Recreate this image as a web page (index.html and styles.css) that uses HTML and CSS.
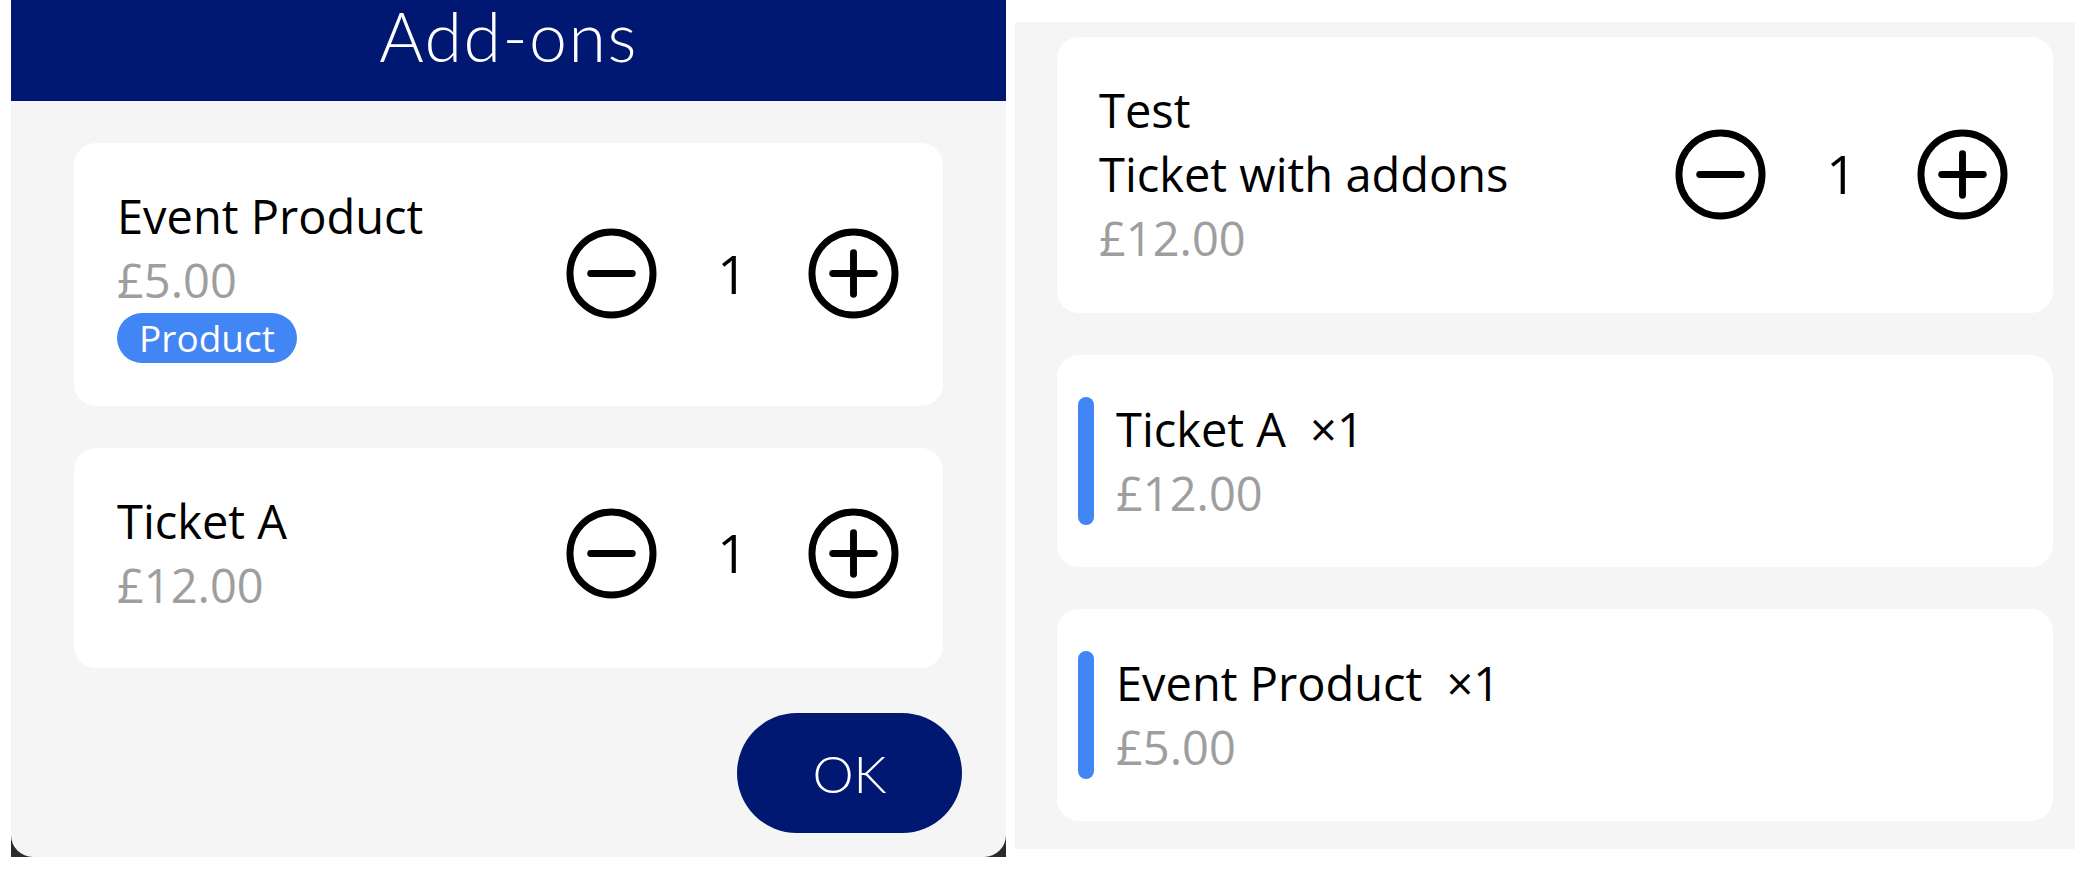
FILE: index.html
```html
<!DOCTYPE html>
<html lang="en">
<head>
<meta charset="utf-8">
<title>Add-ons</title>
<link rel="stylesheet" href="styles.css">
</head>
<body>
<div class="page">
  <div class="modal-wrap">
    <div class="modal">
      <div class="modal-header">Add-ons</div>
      <div class="modal-body">
        <div class="card">
          <div class="info">
            <div class="name">Event Product</div>
            <div class="price">£5.00</div>
            <span class="badge">Product</span>
          </div>
          <div class="stepper">
            <svg class="step-icon" viewBox="0 0 92 92"><circle cx="46" cy="46" r="42" fill="none" stroke="#000" stroke-width="7"/><line x1="25" y1="46" x2="67" y2="46" stroke="#000" stroke-width="7" stroke-linecap="round"/></svg>
            <span class="count">1</span>
            <svg class="step-icon" viewBox="0 0 92 92"><circle cx="46" cy="46" r="42" fill="none" stroke="#000" stroke-width="7"/><line x1="25" y1="46" x2="67" y2="46" stroke="#000" stroke-width="7" stroke-linecap="round"/><line x1="46" y1="25" x2="46" y2="67" stroke="#000" stroke-width="7" stroke-linecap="round"/></svg>
          </div>
        </div>
        <div class="card card-plain">
          <div class="info">
            <div class="name">Ticket A</div>
            <div class="price">£12.00</div>
          </div>
          <div class="stepper">
            <svg class="step-icon" viewBox="0 0 92 92"><circle cx="46" cy="46" r="42" fill="none" stroke="#000" stroke-width="7"/><line x1="25" y1="46" x2="67" y2="46" stroke="#000" stroke-width="7" stroke-linecap="round"/></svg>
            <span class="count">1</span>
            <svg class="step-icon" viewBox="0 0 92 92"><circle cx="46" cy="46" r="42" fill="none" stroke="#000" stroke-width="7"/><line x1="25" y1="46" x2="67" y2="46" stroke="#000" stroke-width="7" stroke-linecap="round"/><line x1="46" y1="25" x2="46" y2="67" stroke="#000" stroke-width="7" stroke-linecap="round"/></svg>
          </div>
        </div>
        <button class="ok-btn">OK</button>
      </div>
    </div>
  </div>

  <div class="panel">
    <div class="card card-main">
      <div class="info">
        <div class="name">Test</div>
        <div class="name">Ticket with addons</div>
        <div class="price">£12.00</div>
      </div>
      <div class="stepper">
        <svg class="step-icon" viewBox="0 0 92 92"><circle cx="46" cy="46" r="42" fill="none" stroke="#000" stroke-width="7"/><line x1="25" y1="46" x2="67" y2="46" stroke="#000" stroke-width="7" stroke-linecap="round"/></svg>
        <span class="count">1</span>
        <svg class="step-icon" viewBox="0 0 92 92"><circle cx="46" cy="46" r="42" fill="none" stroke="#000" stroke-width="7"/><line x1="25" y1="46" x2="67" y2="46" stroke="#000" stroke-width="7" stroke-linecap="round"/><line x1="46" y1="25" x2="46" y2="67" stroke="#000" stroke-width="7" stroke-linecap="round"/></svg>
      </div>
    </div>
    <div class="line-card">
      <div class="bar"></div>
      <div class="line-info">
        <div class="name">Ticket A<span class="qty">×1</span></div>
        <div class="price">£12.00</div>
      </div>
    </div>
    <div class="line-card">
      <div class="bar"></div>
      <div class="line-info">
        <div class="name">Event Product<span class="qty">×1</span></div>
        <div class="price">£5.00</div>
      </div>
    </div>
  </div>
</div>
</body>
</html>
```

FILE: styles.css
```css
* { box-sizing: border-box; }

html, body {
  margin: 0;
  padding: 0;
  background: #ffffff;
}

body {
  font-family: "Open Sans", "Liberation Sans", sans-serif;
  color: #000;
  width: 2075px;
  height: 882px;
  overflow: hidden;
}

.page {
  display: flex;
  align-items: flex-start;
  padding-left: 11px;
}

.modal-wrap {
  width: 995px;
  height: 857px;
  background: #2b2b2b;
}

.modal {
  height: 857px;
  background: #f5f5f5;
  border-radius: 0 0 22px 22px;
  display: flex;
  flex-direction: column;
}

.modal-header {
  height: 101px;
  background: #001871;
  color: #fff;
  font-family: "Lato", "Liberation Sans", sans-serif;
  font-weight: 300;
  font-size: 68px;
  line-height: 68px;
  letter-spacing: 1.5px;
  text-align: center;
  padding-top: 2px;
}

.modal-body {
  display: flex;
  flex-direction: column;
  gap: 42px;
  padding: 42px 44px 24px 63px;
}

.card {
  background: #fff;
  border-radius: 22px;
  display: flex;
  align-items: center;
  justify-content: space-between;
  padding: 41px 44px 43px 43px;
  margin-right: 19px;
}

.card-plain {
  padding-bottom: 51px;
}

.info {
  display: flex;
  flex-direction: column;
  align-items: flex-start;
}

.name {
  font-size: 47px;
  line-height: 64px;
  color: #000;
  white-space: nowrap;
}

.price {
  font-size: 47px;
  line-height: 64px;
  color: #9e9e9e;
}

.badge {
  margin-top: 1px;
  background: #4285f4;
  color: #fff;
  font-size: 37px;
  line-height: 50px;
  height: 50px;
  padding: 0 22px;
  border-radius: 25px;
}

.stepper {
  display: flex;
  align-items: center;
}

.step-icon {
  width: 91px;
  height: 91px;
  display: block;
}

.count {
  width: 151px;
  text-align: center;
  font-size: 53px;
  line-height: 70px;
}

.ok-btn {
  align-self: flex-end;
  margin-top: 3px;
  width: 225px;
  height: 120px;
  border: none;
  border-radius: 60px;
  background: #001871;
  color: #fff;
  font-family: "Lato", "Liberation Sans", sans-serif;
  font-weight: 300;
  font-size: 52px;
  padding: 0;
}

.panel {
  margin-top: 22px;
  margin-left: 9px;
  flex: 1;
  height: 827px;
  background: #f5f5f5;
  display: flex;
  flex-direction: column;
  gap: 42px;
  padding: 15px 22px 28px 42px;
}

.panel .card {
  margin-right: 0;
}

.card-main {
  padding: 41px 45px 43px 42px;
}

.line-card {
  background: #fff;
  border-radius: 22px;
  display: flex;
  padding: 42px 21px 42px 21px;
}

.bar {
  width: 16px;
  border-radius: 8px;
  background: #4285f4;
}

.line-info {
  margin-left: 22px;
}

.qty {
  margin-left: 24px;
}
```
